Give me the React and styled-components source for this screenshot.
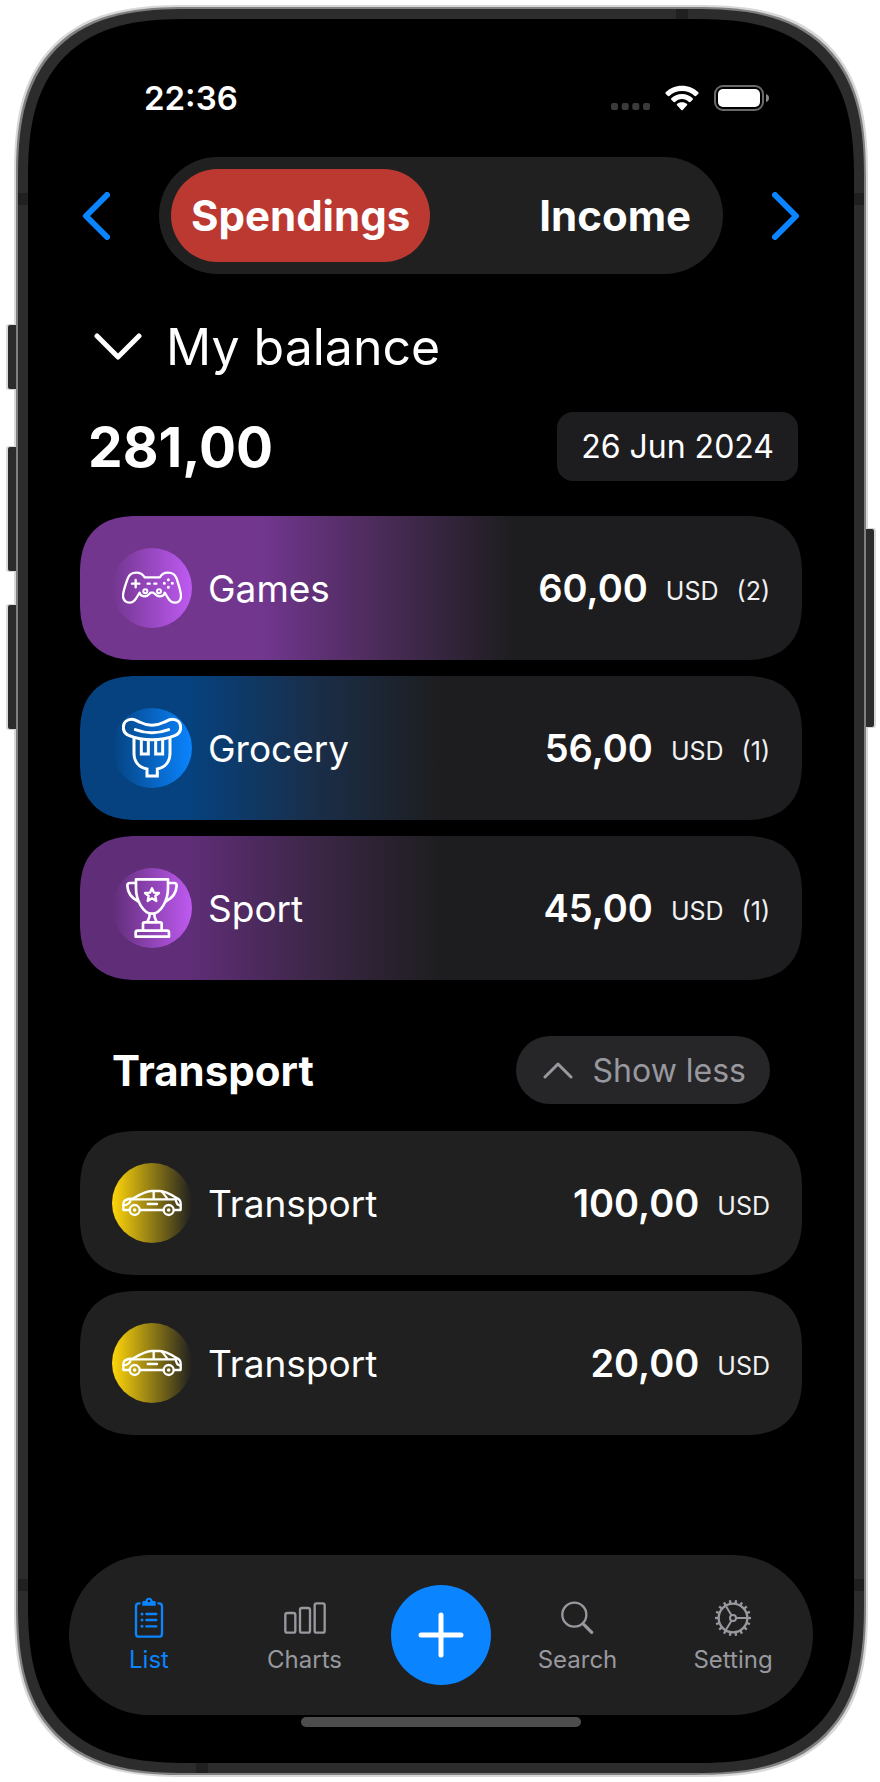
import React, { useState } from "react";
import styled, { createGlobalStyle } from "styled-components";

const color = {
  blue: "#0a84ff",
  grey: "#98989f",
  card: "#1d1d1f",
  panel: "#202020",
  bezel: "#2c2c2c",
};

const GlobalStyle = createGlobalStyle`
  *, *::before, *::after { box-sizing: border-box; }
  body {
    margin: 0;
    background: #fff;
    color: #fff;
    font-family: Inter, "Liberation Sans", sans-serif;
  }
  button {
    margin: 0;
    padding: 0;
    border: 0;
    background: none;
    color: inherit;
    font: inherit;
    cursor: pointer;
  }
  h1, h2, ul { margin: 0; padding: 0; font-weight: inherit; }
  ul { list-style: none; }
  svg { display: block; flex: none; }
`;

/* ---------- device ---------- */

const Stage = styled.div`
  display: flex;
  min-height: 100vh;
  padding: 9px 16px 9px 18px;
`;

const Device = styled.div`
  position: relative;
  display: flex;
  flex: 1;
  min-width: 0;
  border: 10px solid ${color.bezel};
  border-radius: 144px;
  background: #000;
  box-shadow: 0 0 0 2px #808080, 0 0 0 4px #d8d8d8;
  @supports (corner-shape: superellipse(1.4)) {
    border-radius: 170px;
    corner-shape: superellipse(1.4);
  }
`;

const SideKey = styled.span`
  position: absolute;
  ${(p) => (p.$side === "left" ? "left: -20px" : "right: -20px")};
  top: ${(p) => p.$top}px;
  width: 8px;
  height: ${(p) => p.$length}px;
  border-radius: ${(p) => (p.$side === "left" ? "2px 0 0 2px" : "0 2px 2px 0")};
  background: ${color.bezel};
  box-shadow: ${(p) => (p.$side === "left" ? "-1px" : "1px")} 0 0 1px #d8d8d8;
`;

const Antenna = styled.span`
  position: absolute;
  background: ${color.panel};
  ${(p) =>
    p.$edge === "left" || p.$edge === "right"
      ? `${p.$edge}: -10px; width: 10px; height: 12px;`
      : `${p.$edge}: -10px; width: 12px; height: 10px;`}
  ${(p) => p.$from}: ${(p) => p.$at}px;
`;

const Screen = styled.div`
  display: flex;
  flex: 1;
  flex-direction: column;
  min-width: 0;
  padding: 59px 0 36px;
`;

/* ---------- status bar ---------- */

const StatusBar = styled.div`
  display: flex;
  align-items: center;
  justify-content: space-between;
  height: 40px;
  padding: 0 84px 0 116px;
  font-size: 33px;
  font-weight: 600;
`;

const StatusIcons = styled.div`
  display: flex;
  align-items: center;
  gap: 15px;
`;

/* ---------- content ---------- */

const Content = styled.main`
  padding: 39px 52px 0;
`;

const PeriodNav = styled.nav`
  display: flex;
  align-items: center;
  justify-content: space-between;
`;

const ArrowButton = styled.button`
  display: flex;
  justify-content: center;
  width: 32px;
  padding: 16px 0;
  color: ${color.blue};
`;

const Segments = styled.div`
  display: flex;
  flex: 1;
  justify-content: space-between;
  margin: 0 47px;
  padding: 12px;
  border-radius: 59px;
  background: ${color.panel};
`;

const Segment = styled.button`
  height: 93px;
  padding: 0 20px;
  border-radius: 47px;
  background: ${(p) => (p.$active ? "#bc3932" : "none")};
  font-size: 42px;
  font-weight: 700;
`;

const BalanceToggle = styled.button`
  display: flex;
  align-items: center;
  gap: 24px;
  margin-top: 43px;
  padding-left: 14px;
  font-size: 50px;
  line-height: 60px;
`;

const TotalRow = styled.div`
  display: flex;
  align-items: center;
  justify-content: space-between;
  margin: 35px 0;
  padding: 0 4px 0 8px;
`;

const Total = styled.strong`
  font-size: 55px;
  font-weight: 700;
  line-height: 60px;
`;

const DateButton = styled.button`
  height: 69px;
  padding: 0 24px;
  border-radius: 16px;
  background: ${color.card};
  font-size: 32px;
`;

const SectionHeader = styled.div`
  display: flex;
  align-items: center;
  justify-content: space-between;
  margin: 56px 0 27px;
  padding: 0 32px;
`;

const SectionTitle = styled.h2`
  font-size: 42px;
  font-weight: 700;
`;

const ShowLess = styled.button`
  display: flex;
  align-items: center;
  gap: 20px;
  height: 68px;
  padding: 0 24px 0 27px;
  border-radius: 34px;
  background: #262628;
  color: ${color.grey};
  font-size: 32px;
`;

const CardList = styled.ul`
  display: flex;
  flex-direction: column;
  gap: 16px;
`;

const Card = styled.li`
  display: flex;
  align-items: center;
  gap: 16px;
  height: 144px;
  padding: 0 32px;
  border-radius: 50px;
  background: ${(p) => p.$fill};
  @supports (corner-shape: superellipse(1.3)) {
    border-radius: 58px;
    corner-shape: superellipse(1.3);
  }
`;

const IconDisc = styled.span`
  display: flex;
  align-items: center;
  justify-content: center;
  flex: none;
  width: 80px;
  height: 80px;
  border-radius: 50%;
  background: linear-gradient(${(p) => (p.$flip ? "270deg" : "90deg")}, ${(p) => p.$tint}00, ${(p) => p.$tint});
`;

const CardName = styled.span`
  flex: 1;
  font-size: 37px;
`;

const Sum = styled.span`
  display: flex;
  align-items: center;
  gap: 18px;
`;

const SumValue = styled.strong`
  font-size: 38px;
  font-weight: 600;
`;

const SumNote = styled.span`
  padding-top: 5px;
  color: #f0f0f0;
  font-size: 25px;
`;

/* ---------- tab bar ---------- */

const TabBar = styled.nav`
  display: grid;
  grid-template-columns: 160fr 151fr 122fr 151fr 160fr;
  align-items: center;
  justify-items: center;
  height: 160px;
  margin: auto 41px 0;
  border-radius: 80px;
  background: ${color.panel};
`;

const Tab = styled.button`
  display: flex;
  flex-direction: column;
  align-items: center;
  gap: 7px;
  color: ${(p) => (p.$active ? color.blue : color.grey)};
  font-size: 24px;
  line-height: 28px;
`;

const TabIcon = styled.span`
  display: flex;
  align-items: center;
  height: 42px;
`;

const AddButton = styled.button`
  display: flex;
  align-items: center;
  justify-content: center;
  width: 100px;
  height: 100px;
  border-radius: 50%;
  background: ${color.blue};
`;

const HomeIndicator = styled.div`
  align-self: center;
  width: 280px;
  height: 10px;
  margin-top: 2px;
  border-radius: 5px;
  background: #4d4d4d;
`;

/* ---------- icons ---------- */

const line = (strokeWidth) => ({
  fill: "none",
  stroke: "currentColor",
  strokeWidth,
  strokeLinecap: "round",
  strokeLinejoin: "round",
  "aria-hidden": true,
});

const Chevron = ({ width, height, d, weight = 6 }) => (
  <svg width={width} height={height} viewBox={`0 0 ${width} ${height}`} {...line(weight)}>
    <path d={d} />
  </svg>
);

const SignalIcon = () => (
  <svg width="39" height="26" viewBox="0 0 39 26" fill="#3a3a3a" aria-hidden="true">
    {[0, 10.7, 21.3, 32].map((x) => (
      <rect key={x} x={x} y="18" width="7" height="7" rx="2" />
    ))}
  </svg>
);

const WifiIcon = () => (
  <svg width="34" height="26" viewBox="0 0 102 78" fill="#fff" aria-hidden="true">
    <path d="M51 2C32 2 14 9 2 22Q0 24 2 26L9 33Q11 34 13 33C23 23 36 18 51 18C66 18 79 23 89 33Q91 34 93 33L100 26Q102 24 100 22C88 9 70 2 51 2Z" />
    <path d="M51 27C38 27 27 32 19 40Q17 42 19 44L26 51Q28 52 30 51C36 45 43 42 51 42C59 42 66 45 72 51Q74 52 76 51L83 44Q85 42 83 40C75 32 64 27 51 27Z" />
    <path d="M51 52C45 52 40 54 36 57Q34 59 36 61L49 75Q51 77 53 75L66 61Q68 59 66 57C62 54 57 52 51 52Z" />
  </svg>
);

const BatteryIcon = () => (
  <svg width="56" height="26" viewBox="0 0 56 26" aria-hidden="true">
    <rect x="1" y="1" width="48" height="24" rx="8" fill="none" stroke="#6a6a6a" strokeWidth="2" />
    <rect x="4" y="4" width="42" height="18" rx="5" fill="#fff" />
    <path d="M52 9Q55 10 55 13Q55 16 52 17Z" fill="#8a8a8a" />
  </svg>
);

const GamepadIcon = () => (
  <svg width="60" height="60" viewBox="0 0 180 180" {...line(7)}>
    <path d="M68 58H114C118 50 126 44 138 44C152 44 160 50 164 62C170 80 177 100 177 114C177 126 169 134 158 134C142 134 138 118 128 104C127 112 120 115 112 115C104 115 99 108 94 104H86C82 108 78 115 69 115C60 115 55 112 53 104C43 118 39 134 23 134C12 134 3 126 3 114C3 100 11 80 17 62C21 50 30 44 43 44C55 44 63 50 68 58Z" />
    <path d="M30 77H52M41 66V88M77 77H83M97 77H103" />
    <circle cx="70" cy="100" r="6" strokeWidth="6" />
    <circle cx="111" cy="100" r="6" strokeWidth="6" />
    <path strokeWidth="9" d="M139 65V65.1M139 88V88.1M127 76V76.1M151 76V76.1" />
  </svg>
);

const SausageIcon = () => (
  <svg width="60" height="62" viewBox="0 -3 180 186" {...line(9)}>
    <path d="M29 4C40 4 45 9 52 12C76 24 104 24 128 12C135 9 140 4 151 4C166 4 176 14 176 28C176 40 170 48 160 52C116 70 64 70 20 52C10 48 4 40 4 28C4 14 14 4 29 4Z" />
    <path d="M40 35Q90 54 140 35" />
    <path strokeLinejoin="miter" d="M36 60V106C36 130 50 148 75 153V174H106V153C130 148 144 130 144 106V60" />
    <path strokeLinejoin="miter" d="M58 66V108H79V66M101 66V108H122V66" />
  </svg>
);

const TrophyIcon = () => (
  <svg width="60" height="60" viewBox="0 0 180 180" {...line(8)}>
    <path d="M42 4H138V30C138 68 116 107 90 107C64 107 42 68 42 30Z" />
    <path d="M41 15H24Q16 15 16 23C17 44 28 60 48 70M139 15H156Q164 15 164 23C163 44 152 60 132 70" />
    <path
      strokeWidth="7"
      d="M90 31L96 44L111 45L100 54L103 69L90 61L77 69L80 54L69 45L84 44Z"
    />
    <path d="M83 108C84 118 79 124 76 131M97 108C96 118 101 124 104 131" />
    <path d="M63 156V137Q63 133 67 133H115Q119 133 119 137V156M41 176V164Q41 158 47 158H135Q141 158 141 164V176Z" />
  </svg>
);

const CarIcon = () => (
  <svg width="60" height="60" viewBox="0 0 180 180" {...line(7)}>
    <path d="M22 111H4V95C4 84 8 81 20 78L34 76C54 64 72 54 88 54H112C130 54 148 65 162 74C172 78 176 82 176 92V111H157M55 111H123" />
    <path d="M30 79H160M95 55V78M120 56L136 77M5 97C18 96 25 89 26 80M175 98C166 97 162 89 161 77M77 93H105" />
    <circle cx="38" cy="111" r="15" />
    <circle cx="140" cy="111" r="15" />
    <circle cx="38" cy="111" r="3" strokeWidth="5" />
    <circle cx="140" cy="111" r="3" strokeWidth="5" />
  </svg>
);

const ClipboardIcon = () => (
  <svg width="30" height="41" viewBox="0 0 90 123" {...line(7)}>
    <path d="M17 19H15Q6 19 6 28V110Q6 119 15 119H75Q84 119 84 110V28Q84 19 75 19H73" />
    <path
      fill="currentColor"
      fillRule="evenodd"
      stroke="none"
      d="M25 15Q25 12 28 12H34C35 5 39 2 45 2S55 5 56 12H62Q65 12 65 15V26H25ZM45 8A4 4 0 1 0 45 16A4 4 0 1 0 45 8Z"
    />
    <path d="M37 51H67M37 69H67M37 88H67" />
    <path strokeWidth="9" d="M24 51V51.1M24 69V69.1M24 88V88.1" />
  </svg>
);

const BarsIcon = () => (
  <svg width="42" height="32" viewBox="0 0 126 96" {...line(7)}>
    <rect x="4" y="33" width="30" height="59" rx="6" />
    <rect x="48" y="18" width="30" height="74" rx="6" />
    <rect x="92" y="4" width="30" height="88" rx="6" />
  </svg>
);

const SearchIcon = () => (
  <svg width="33" height="33" viewBox="0 0 99 99" {...line(7)}>
    <circle cx="40" cy="41" r="36" />
    <path strokeWidth="10" d="M69 71L92 94" />
  </svg>
);

const GearIcon = () => (
  <svg width="36" height="36" viewBox="-54 -54 108 108" {...line(7)}>
    <circle r="43" />
    <circle r="9" strokeWidth="6" />
    <path strokeWidth="6" d="M10 0H42M-5 -9L-22 -37M-5 9L-22 37" />
    {Array.from({ length: 18 }, (_, i) => (
      <path key={i} strokeLinecap="butt" d="M44 0H54" transform={`rotate(${i * 20})`} />
    ))}
  </svg>
);

const PlusIcon = () => (
  <svg width="46" height="46" viewBox="0 0 46 46" {...line(5)}>
    <path d="M23 3V43M3 23H43" />
  </svg>
);

/* ---------- data ---------- */

const fade = (from, mid, start, end) =>
  `linear-gradient(90deg, ${from} ${start}%, ${mid} ${(start + end) / 2}%, ${color.card} ${end}%)`;

const categories = [
  { name: "Games", sum: "60,00", count: 2, Icon: GamepadIcon, tint: "#bf5af2", fill: fade("#72368f", "#482b56", 25, 60) },
  { name: "Grocery", sum: "56,00", count: 1, Icon: SausageIcon, tint: "#0a84ff", fill: fade("#05427f", "#1a2e49", 15, 50) },
  { name: "Sport", sum: "45,00", count: 1, Icon: TrophyIcon, tint: "#bf5af2", fill: fade("#602d78", "#3c2747", 15, 50) },
];

const trips = [
  { id: 1, sum: "100,00" },
  { id: 2, sum: "20,00" },
];

const tabs = [
  { name: "List", Icon: ClipboardIcon },
  { name: "Charts", Icon: BarsIcon },
  null,
  { name: "Search", Icon: SearchIcon },
  { name: "Setting", Icon: GearIcon },
];

const keys = [
  { side: "left", top: 306, length: 64 },
  { side: "left", top: 428, length: 124 },
  { side: "left", top: 586, length: 124 },
  { side: "right", top: 510, length: 198 },
];

const antennas = [
  { edge: "left", from: "top", at: 174 },
  { edge: "right", from: "top", at: 174 },
  { edge: "left", from: "bottom", at: 172 },
  { edge: "right", from: "bottom", at: 172 },
  { edge: "top", from: "right", at: 166 },
  { edge: "bottom", from: "left", at: 168 },
];

export default function App() {
  const [segment, setSegment] = useState("Spendings");
  const [activeTab, setActiveTab] = useState("List");

  return (
    <>
      <GlobalStyle />
      <Stage>
        <Device>
          {keys.map((k) => (
            <SideKey key={k.side + k.top} $side={k.side} $top={k.top} $length={k.length} />
          ))}
          {antennas.map((a) => (
            <Antenna key={a.edge + a.from} $edge={a.edge} $from={a.from} $at={a.at} />
          ))}
          <Screen>
            <StatusBar>
              <time>22:36</time>
              <StatusIcons>
                <SignalIcon />
                <WifiIcon />
                <BatteryIcon />
              </StatusIcons>
            </StatusBar>

            <Content>
              <PeriodNav>
                <ArrowButton aria-label="Previous">
                  <Chevron width={28} height={48} d="M25 3L4 24L25 45" />
                </ArrowButton>
                <Segments>
                  {["Spendings", "Income"].map((name) => (
                    <Segment key={name} $active={segment === name} onClick={() => setSegment(name)}>
                      {name}
                    </Segment>
                  ))}
                </Segments>
                <ArrowButton aria-label="Next">
                  <Chevron width={28} height={48} d="M3 3L24 24L3 45" />
                </ArrowButton>
              </PeriodNav>

              <BalanceToggle>
                <Chevron width={48} height={28} weight={5} d="M3 3L24 24L45 3" />
                <span>My balance</span>
              </BalanceToggle>

              <TotalRow>
                <Total>281,00</Total>
                <DateButton>26 Jun 2024</DateButton>
              </TotalRow>

              <CardList>
                {categories.map(({ name, sum, count, Icon, tint, fill }) => (
                  <Card key={name} $fill={fill}>
                    <IconDisc $tint={tint}>
                      <Icon />
                    </IconDisc>
                    <CardName>{name}</CardName>
                    <Sum>
                      <SumValue>{sum}</SumValue>
                      <SumNote>USD</SumNote>
                      <SumNote>({count})</SumNote>
                    </Sum>
                  </Card>
                ))}
              </CardList>

              <SectionHeader>
                <SectionTitle>Transport</SectionTitle>
                <ShowLess>
                  <Chevron width={30} height={18} weight={3} d="M2 16L15 3L28 16" />
                  <span>Show less</span>
                </ShowLess>
              </SectionHeader>

              <CardList>
                {trips.map(({ id, sum }) => (
                  <Card key={id} $fill={color.panel}>
                    <IconDisc $tint="#ffd60a" $flip>
                      <CarIcon />
                    </IconDisc>
                    <CardName>Transport</CardName>
                    <Sum>
                      <SumValue>{sum}</SumValue>
                      <SumNote>USD</SumNote>
                    </Sum>
                  </Card>
                ))}
              </CardList>
            </Content>

            <TabBar>
              {tabs.map((tab) =>
                tab ? (
                  <Tab key={tab.name} $active={activeTab === tab.name} onClick={() => setActiveTab(tab.name)}>
                    <TabIcon>
                      <tab.Icon />
                    </TabIcon>
                    <span>{tab.name}</span>
                  </Tab>
                ) : (
                  <AddButton key="add" aria-label="Add">
                    <PlusIcon />
                  </AddButton>
                )
              )}
            </TabBar>
            <HomeIndicator />
          </Screen>
        </Device>
      </Stage>
    </>
  );
}
